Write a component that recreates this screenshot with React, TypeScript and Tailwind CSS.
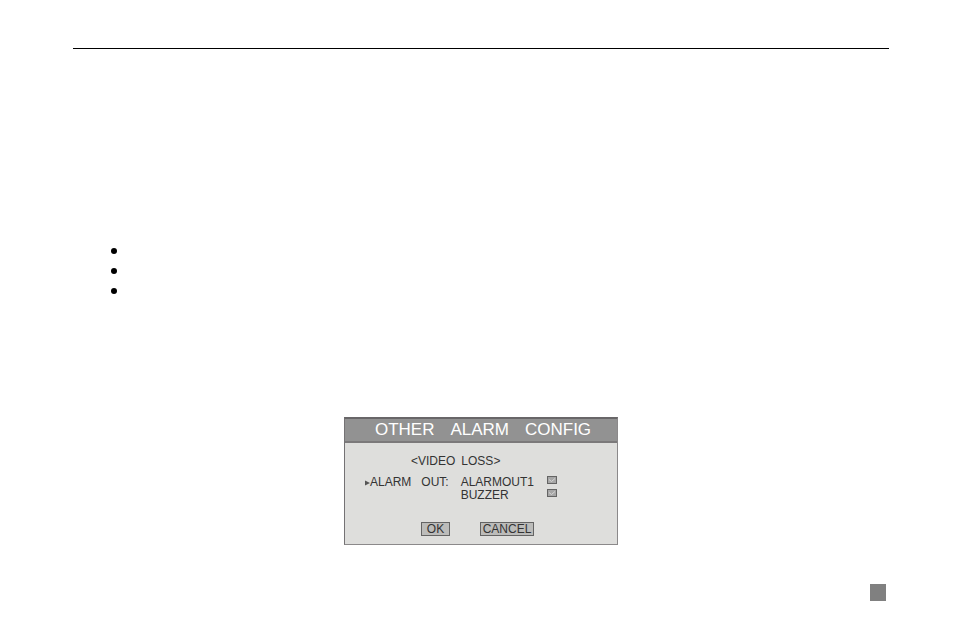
import { useState } from 'react'

const OUTPUTS = [
  { id: 'alarmout1', label: 'ALARMOUT1' },
  { id: 'buzzer', label: 'BUZZER' },
]

const NOTES = [1, 2, 3]

function TickBox({ id, checked, onChange }: { id: string; checked: boolean; onChange: () => void }) {
  return (
    <span className="relative block h-2 w-[10px]">
      <input
        id={id}
        type="checkbox"
        checked={checked}
        onChange={onChange}
        className="block h-2 w-[10px] appearance-none border border-[#646464] bg-[#a6a6a6]"
      />
      {checked && (
        <svg viewBox="0 0 10 8" className="pointer-events-none absolute inset-0 h-2 w-[10px]" fill="none">
          <path d="M2 3.5 4.5 5.5 8 2.5" stroke="#d6d6d6" strokeWidth="1" />
        </svg>
      )}
    </span>
  )
}

function AlarmDialog() {
  const [enabled, setEnabled] = useState<string[]>(['alarmout1', 'buzzer'])

  function toggle(id: string) {
    setEnabled(prev => (prev.includes(id) ? prev.filter(x => x !== id) : [...prev, id]))
  }

  return (
    <section className="mx-auto w-full max-w-[274px] border border-t-2 border-[#8b898a] border-t-[#686668] border-l-[#747274] bg-[#dededc] pb-2 text-xs leading-[13px] text-[#333]">
      <h1 className="flex h-6 items-center justify-center gap-4 border-b-2 border-[#7b797a] bg-[#929292] pl-1 text-[17px] leading-5 text-white">
        <span>OTHER</span>
        <span>ALARM</span>
        <span>CONFIG</span>
      </h1>

      <h2 className="mt-3 flex gap-[6px] pl-[66px]">
        <span>&lt;VIDEO</span>
        <span>LOSS&gt;</span>
      </h2>

      <div className="mt-2 flex pl-5">
        <div className="flex h-[13px] items-center">
          <svg viewBox="0 0 5 6" className="h-[6px] w-[5px]">
            <path d="M0 0.5 5 3 0 5.5Z" fill="#555" />
          </svg>
          <span>ALARM</span>
          <span className="ml-[10px]">OUT:</span>
        </div>
        <div className="ml-3">
          {OUTPUTS.map(o => (
            <div key={o.id} className="flex h-[13px]">
              <label htmlFor={o.id} className="w-[86px]">{o.label}</label>
              <TickBox id={o.id} checked={enabled.includes(o.id)} onChange={() => toggle(o.id)} />
            </div>
          ))}
        </div>
      </div>

      <div className="mt-5 flex gap-[30px] pl-[76px]">
        <button className="h-[14px] w-[29px] border border-[#646464] bg-[#bcbcba] leading-3">OK</button>
        <button className="h-[14px] w-[54px] border border-[#646464] bg-[#bcbcba] leading-3">CANCEL</button>
      </div>
    </section>
  )
}

export default function App() {
  return (
    <div className="flex min-h-screen flex-col bg-white pt-12 pr-[65px] pb-9 pl-[73px] font-['Liberation_Sans',Arial,sans-serif]">
      <hr className="border-t border-black" />

      <ul className="mt-[199px] mb-[123px] flex flex-col gap-[14px] pl-[38px]">
        {NOTES.map(n => (
          <li key={n} className="size-[6px] rounded-full bg-black" />
        ))}
      </ul>

      <AlarmDialog />

      {/* page number block */}
      <footer className="mt-auto mr-[3px] h-[17px] w-4 self-end bg-[#808080]" />
    </div>
  )
}
